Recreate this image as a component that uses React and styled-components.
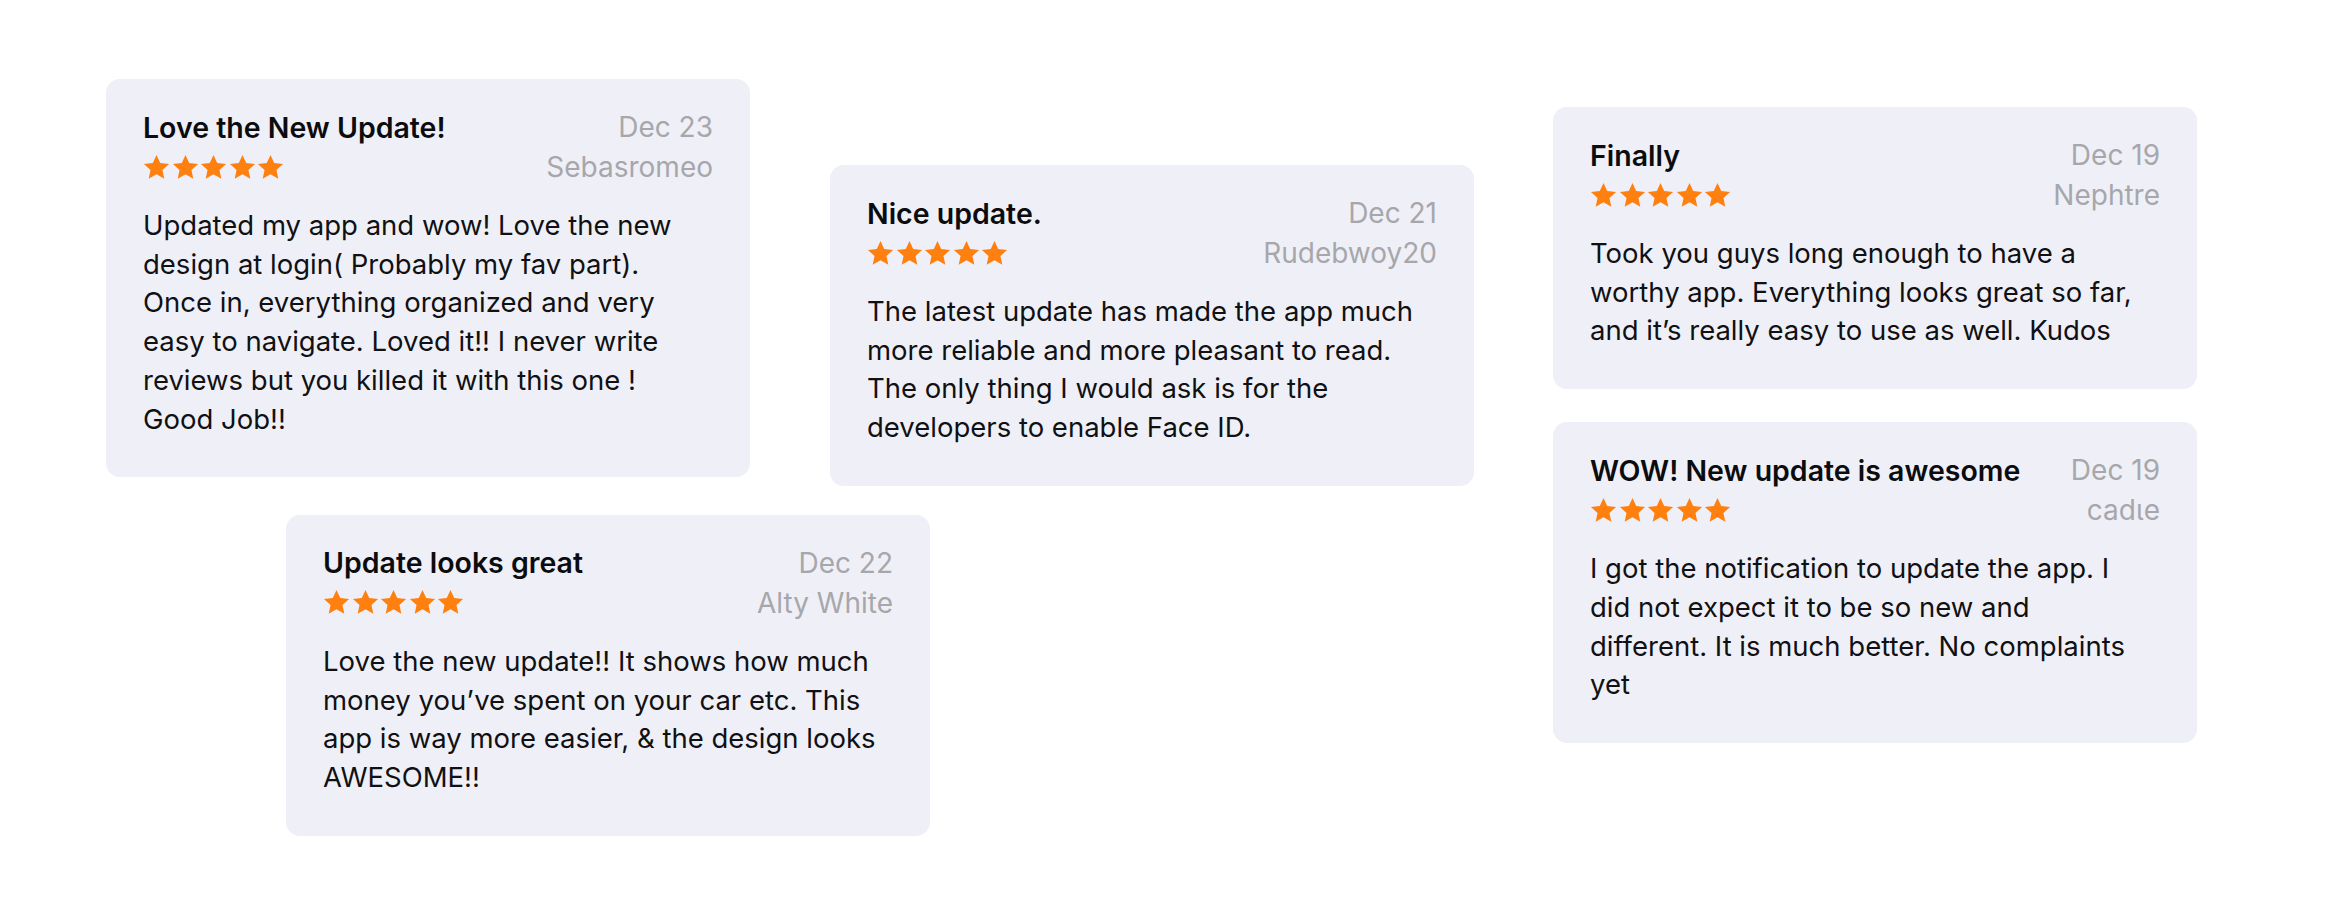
import React from 'react'
import styled, { createGlobalStyle } from 'styled-components'

const reviews = {
  love: {
    title: 'Love the New Update!',
    date: 'Dec 23',
    author: 'Sebasromeo',
    lines: [
      'Updated my app and wow! Love the new',
      'design at login( Probably my fav part).',
      'Once in, everything organized and very',
      'easy to navigate. Loved it!! I never write',
      'reviews but you killed it with this one !',
      'Good Job!!',
    ],
  },
  looks: {
    title: 'Update looks great',
    date: 'Dec 22',
    author: 'Alty White',
    lines: [
      'Love the new update!! It shows how much',
      'money you’ve spent on your car etc. This',
      'app is way more easier, & the design looks',
      'AWESOME!!',
    ],
  },
  nice: {
    title: 'Nice update.',
    date: 'Dec 21',
    author: 'Rudebwoy20',
    lines: [
      'The latest update has made the app much',
      'more reliable and more pleasant to read.',
      'The only thing I would ask is for the',
      'developers to enable Face ID.',
    ],
  },
  finally: {
    title: 'Finally',
    date: 'Dec 19',
    author: 'Nephtre',
    lines: [
      'Took you guys long enough to have a',
      'worthy app. Everything looks great so far,',
      'and it’s really easy to use as well. Kudos',
    ],
  },
  wow: {
    title: 'WOW! New update is awesome',
    date: 'Dec 19',
    author: 'cadιe',
    lines: [
      'I got the notification to update the app. I',
      'did not expect it to be so new and',
      'different. It is much better. No complaints',
      'yet',
    ],
  },
}

const GlobalStyle = createGlobalStyle`
  html, body {
    margin: 0;
    background: #ffffff;
    font-family: Inter, "Noto Sans", "Liberation Sans", sans-serif;
    -webkit-font-smoothing: antialiased;
  }
`

const Star = ({ size = 27 }) => (
  <svg width={size} height={size} viewBox="0 0 24 24">
    <path
      d="M12 0.8l3.3 7.2 7.9.85-5.9 5.35 1.65 7.8L12 18l-6.95 4 1.65-7.8-5.9-5.35 7.9-.85z"
      fill="#ff7f0f"
    />
  </svg>
)

const Rating = ({ value = 5 }) => (
  <Stars>
    {Array.from({ length: value }).map((_, i) => (
      <Star key={i} />
    ))}
  </Stars>
)

const ReviewCard = ({ review, top = 0, left = 0 }) => (
  <Card $top={top} $left={left}>
    <Header>
      <Title>{review.title}</Title>
      <Meta>{review.date}</Meta>
      <Rating />
      <Meta>{review.author}</Meta>
    </Header>
    <Body>
      {review.lines.map((line, i) => (
        <Line key={i}>{line}</Line>
      ))}
    </Body>
  </Card>
)

export default function App() {
  return (
    <>
      <GlobalStyle />
      <Page>
        <LeftGroup>
          <TopRow>
            <ReviewCard review={reviews.love} />
            <ReviewCard review={reviews.nice} top={86} left={80} />
          </TopRow>
          <ReviewCard review={reviews.looks} top={29} left={180} />
        </LeftGroup>
        <RightColumn>
          <ReviewCard review={reviews.finally} />
          <ReviewCard review={reviews.wow} />
        </RightColumn>
      </Page>
    </>
  )
}

const Page = styled.div`
  display: flex;
  align-items: flex-start;
  padding: 79px 0 0 106px;
  min-height: 918px;
  box-sizing: border-box;
`

const LeftGroup = styled.div`
  display: flex;
  flex-direction: column;
  align-items: flex-start;
`

const TopRow = styled.div`
  display: flex;
  align-items: flex-start;
`

const RightColumn = styled.div`
  display: flex;
  flex-direction: column;
  gap: 33px;
  margin: 28px 0 0 79px;
`

const Card = styled.div`
  width: 644px;
  box-sizing: border-box;
  margin-top: ${(p) => p.$top}px;
  margin-left: ${(p) => p.$left}px;
  padding: 28px 37px 39px;
  background: #eff0f7;
  border-radius: 14px;
  flex-shrink: 0;
`

const Header = styled.div`
  display: grid;
  grid-template-columns: 1fr auto;
  grid-auto-rows: 40px;
  align-items: center;
  column-gap: 16px;
`

const Title = styled.div`
  font-size: 28.5px;
  font-weight: 600;
  color: #0c0c0e;
  white-space: nowrap;
`

const Meta = styled.div`
  font-size: 28px;
  color: #a7a7ab;
  text-align: right;
  white-space: nowrap;
`

const Stars = styled.div`
  display: flex;
  gap: 1.5px;
`

const Body = styled.div`
  margin-top: 19px;
  font-size: 27.5px;
  line-height: 38.7px;
  color: #111113;
`

const Line = styled.span`
  display: block;
  white-space: nowrap;
`
